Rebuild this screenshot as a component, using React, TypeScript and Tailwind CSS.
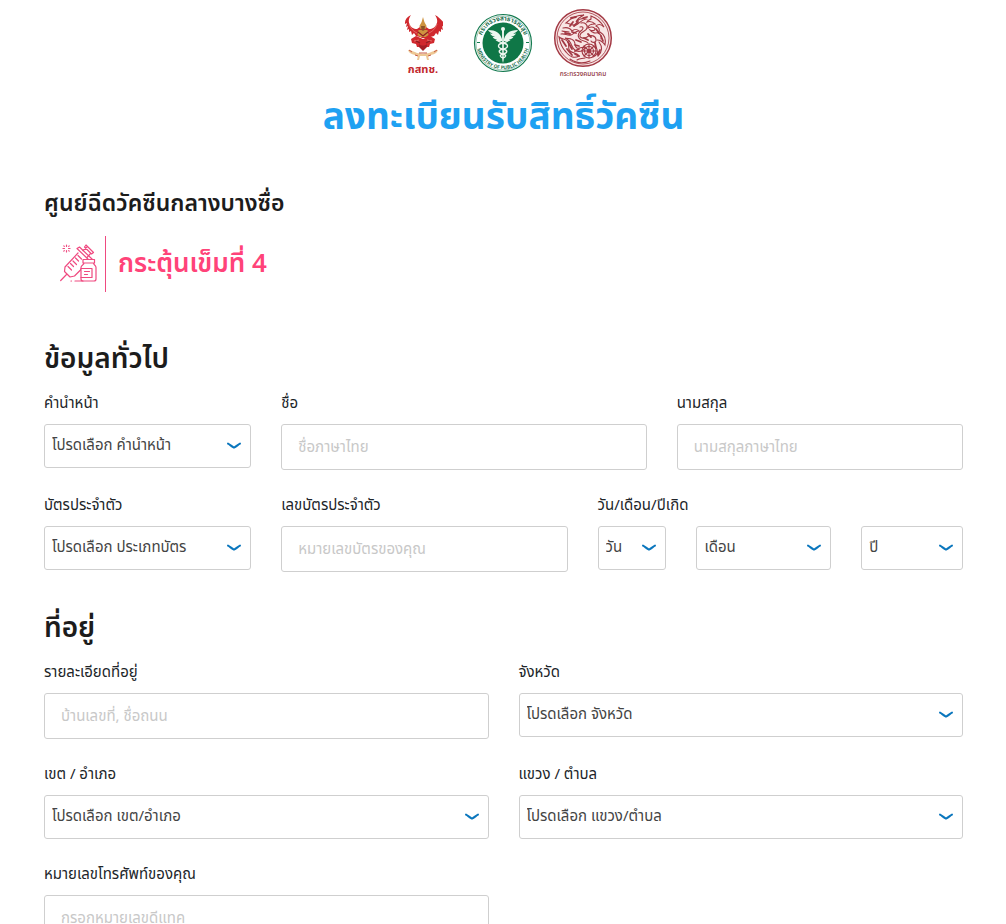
import type { ReactNode } from 'react';

const controlBase =
  'w-full rounded-[3px] border border-[#cfcfcf] bg-white text-[15px] leading-6 outline-none focus:border-[#0a7cc9]';

function Label({ htmlFor, children }: { htmlFor: string; children: ReactNode }) {
  return (
    <label htmlFor={htmlFor} className="block text-[15px] leading-6 text-[#212529]">
      {children}
    </label>
  );
}

function Select({ id, placeholder, label }: { id: string; placeholder: string; label?: string }) {
  return (
    <div className="relative">
      <select
        id={id}
        aria-label={label}
        defaultValue=""
        className={`${controlBase} h-11 appearance-none pr-7 pl-[7px] text-[#444444]`}
      >
        <option value="">{placeholder}</option>
      </select>
      <svg
        viewBox="0 0 16 8"
        className="pointer-events-none absolute top-[18px] right-[9px] h-2 w-4"
        fill="none"
        stroke="#0a76bd"
        strokeWidth="2"
        strokeLinecap="round"
        aria-hidden="true"
      >
        <path d="M2 1.6C4 2.6 5.8 4.8 8 5.6C10.2 4.8 12 2.6 14 1.6" />
      </svg>
    </div>
  );
}

type FieldProps = { id: string; label: string; placeholder: string; className: string };

function SelectField({ id, label, placeholder, className }: FieldProps) {
  return (
    <div className={`flex flex-col gap-2 ${className}`}>
      <Label htmlFor={id}>{label}</Label>
      <Select id={id} placeholder={placeholder} />
    </div>
  );
}

function TextField({ id, label, placeholder, className }: FieldProps) {
  return (
    <div className={`flex flex-col gap-2 ${className}`}>
      <Label htmlFor={id}>{label}</Label>
      <input
        id={id}
        type="text"
        placeholder={placeholder}
        className={`${controlBase} h-[46px] px-4 text-[#444444] placeholder:text-[#c8c8c8]`}
      />
    </div>
  );
}

function GarudaLogo() {
  return (
    <svg viewBox="0 0 40 66" className="h-[66px] w-10" role="img" aria-label="กสทช.">
      <g fill="#d0282e">
        <path d="M8 3C4 5 1.500 8 2 12l2-1-1 4 2-1-1 4 2-1 0 3 2-1 1 4 2-2 2 3 4 1 2 1h6l2-1 4-1 2-3 2 2 1-4 2 1 0-3 2 1-1-4 2 1-1-4 2 1C38.500 8 36 5 32 3c2 3 3 6 1.500 9-1 3-4 5-7.500 5l-3-2h-6l-3 2c-3.500 0-6.500-2-7.500-5C5 9 6 6 8 3Z" />
        <path d="M8 27l5-3 7 3 7-3 5 3-1 4-4 1-1 3-4 0-2 3-2-3-4 0-1-3-4-1Z" />
      </g>
      <g fill="none" stroke="#f4b1a0" strokeWidth=".5">
        <path d="M6 12c2 5 4 7 8 9M34 12c-2 5-4 7-8 9M11 29l5-1m8 0 5 1" />
      </g>
      <g fill="#cf9440">
        <path d="M20 5l1.400 5 2.200 4-1 3h-5.200l-1-3 2.200-4Z" />
        <path d="M15.500 18h9l1 5-3 2h-5l-3-2Z" />
      </g>
      <path d="M18 14h4l-.5 4L20 19l-1.500-1Z" fill="#8d5328" />
      <path d="M15 20l5 4 5-4M13 29l4 2m10-2-4 2" fill="none" stroke="#8d2024" strokeWidth="1.300" />
      <path d="M16 32c2 2 6 2 8 0l0 3-4 4-4-4Z" fill="#a31e26" />
      <path d="M5 38c4 0 6 2 9 3l6 1 6-1c3-1 5-3 9-3-1 3-3 4-7 5l-3 1 1 4h-2l-1-4h-6l-1 4h-2l1-4-3-1C8 42 6 41 5 38Z" fill="#edc794" />
      <path d="M6 38l3 2m25-2-3 2M12 43l3 1m10 0 3-1M16 41h8" fill="none" stroke="#c65a45" strokeWidth="1" />
      <text x="20" y="61" textAnchor="middle" fontSize="11" fontWeight="700" fill="#c2262c">
        กสทช.
      </text>
    </svg>
  );
}

function HealthLogo() {
  return (
    <svg viewBox="0 0 60 60" className="h-[60px] w-[60px]" role="img" aria-label="กระทรวงสาธารณสุข">
      <defs>
        <path id="health-top" d="M7.500 30A22.500 22.500 0 0 1 52.500 30" />
        <path id="health-bottom" d="M3.800 30A26.200 26.200 0 0 0 56.200 30" />
      </defs>
      <circle cx="30" cy="30" r="28.500" fill="#fff" stroke="#147a50" strokeWidth="1.200" />
      <circle cx="30" cy="30" r="27" fill="none" stroke="#147a50" strokeWidth=".4" />
      <circle cx="30" cy="30" r="20.500" fill="#0f7747" />
      <text fontSize="6.500" fontWeight="700" fill="#1d6f4e">
        <textPath href="#health-top" startOffset="50%" textAnchor="middle">
          กระทรวงสาธารณสุข
        </textPath>
      </text>
      <text fontSize="4.800" fontWeight="700" fill="#1d6f4e">
        <textPath href="#health-bottom" startOffset="50%" textAnchor="middle">
          MINISTRY OF PUBLIC HEALTH
        </textPath>
      </text>
      <path d="M4 29.500h3m46 0h3" stroke="#147a50" strokeWidth="1" />
      <g fill="#edf7ef">
        <path d="M29 26C27 20 23 17 15 17c1 2 3 3 5 3.500-1 .2-2 .2-3 0 1 2 3 3 5 3-1 .5-1.500.5-2.500.3 1 2 3 2.600 5 2.500-1 .5-1 .6-2 .6 2 2 4 2 6.500 1Z" />
        <path d="M31 26C33 20 37 17 45 17c-1 2-3 3-5 3.500 1 .2 2 .2 3 0-1 2-3 3-5 3 1 .5 1.500.5 2.500.3-1 2-3 2.600-5 2.500 1 .5 1 .6 2 .6-2 2-4 2-6.500 1Z" />
        <circle cx="30" cy="16" r="2" />
        <path d="M29 16h2L30.700 47 30 50l-.7-3Z" />
      </g>
      <path
        d="M27 23c-4 2-3 6 3 7 6 1 6 5 0 6-5 1-5 4 0 5 4 1 3 3 0 4M33 23c4 2 3 6-3 7-6 1-6 5 0 6 5 1 5 4 0 5-4 1-3 3 0 4"
        fill="none"
        stroke="#edf7ef"
        strokeWidth="1.400"
      />
    </svg>
  );
}

function TransportLogo() {
  return (
    <svg viewBox="0 0 60 70" className="h-[70px] w-[60px]" role="img" aria-label="กระทรวงคมนาคม">
      <circle cx="30" cy="30" r="28.300" fill="#f8e6e5" stroke="#a33a45" strokeWidth="1.500" />
      <circle cx="30" cy="30" r="26" fill="none" stroke="#a94650" strokeWidth=".9" />
      <g fill="none" stroke="#a23843" strokeWidth="1.100" strokeLinecap="round">
        <path d="M13 15c5-5 11-8 18-8-4 2-7 4-8 7 3-3 7-4 10-3-5 1-6 4-10 6-4 1-7-2-10-2Z" />
        <path d="M10 20c4-1 7 0 9 3 2-2 5-2 7 0-4 0-5 3-8 4-4 1-6-2-10-1m1-3c3 1 5 0 7 1" />
        <path d="M38 8c6 2 10 6 13 11-3-3-6-3-8-1 2 1 4 3 3 6-3 2-7 1-9-2 2 1 5 1 5-1-1-3-5-2-7-1 0-4 4-4 7-4-2-2-5-3-8-2 1-2 3-2 4-3Z" />
        <path d="M28 15c4-1 7 2 6 5-1 4-6 3-7 7-1 3 4 4 7 2 4-3 9-1 9 3 0 3-4 3-5 1M27 19c3-1 4 1 2 3-3 2-5 5-3 8 2 4 7 2 9 5" />
        <path d="M6 29c3 3 7 1 9 5 2 3-1 6 2 9 3 3 7 1 9 5-5 3-10 0-13-4-4-4-6-9-7-15Z" />
        <path d="M12 30c4 1 7 0 9 3s0 5 3 7c3 1 5-2 8 0-2 3-5 4-9 3-4-2-4-6-6-9-1-2-3-3-5-4Z" />
        <path d="M47 24c5 3 6 8 5 13-2-3-5-5-8-5m2 2c3 4 4 9-1 14-1-3 0-6-2-9m5-8c1-3-1-5-3-6" />
        <circle cx="36" cy="43" r="7" />
        <circle cx="36" cy="43" r="4.500" />
        <circle cx="36" cy="43" r="1.500" />
        <path d="M36 36v14m-7-7h14m-12-5 10 10m0-10L31 48M17 51c6 4 13 5 20 2m3-4c3-1 4-3 5-5M24 52c3-2 5-1 8-2" />
        <path
          d="M17 18l3-4m1 4 4-4m5-4 4-1m-15 15 4 1m-8 9 4 7m3-4 4 1m-3-6 5 2m7-8 3 3m-7 1 4 2m8-11 3 4M9 32l4 6m1 3 5 6m29-19 2 5m-8 2 1 5m-17 1-4 2M18 10l5-1M12 25l5 1m5 20 4 2m19-2 2-4"
          strokeWidth="1.800"
        />
      </g>
      <text x="30" y="68" textAnchor="middle" fontSize="6.500" fontWeight="500" fill="#8e2f3a">
        กระทรวงคมนาคม
      </text>
    </svg>
  );
}

function VaccineIcon() {
  return (
    <svg
      viewBox="0 0 40 40"
      className="h-10 w-10"
      fill="none"
      stroke="#ef4a80"
      strokeWidth="1.200"
      strokeLinecap="round"
      strokeLinejoin="round"
      aria-hidden="true"
    >
      <path d="M8.500 1v1.500m0 4V8M5 4.500h1.500m4 0H12M5.800 1.800l.5.5m4.900-.5-.5.500M5.800 7.200l.5-.5m4.900.5-.5-.5" />
      <path d="M2.700 36.500 9 30M7 23l-.5 4.500 5.500 5.500 4.500-1 13-13M7 23 20 9" />
      <path d="M19 4.500 33 18l1.500-2.500L21.500 3Z" />
      <path d="M25 6.500 29 3m-1-2 7.500 7.500L33.500 10 26.500 3Zm4.500 8.500-3.500 4" />
      <path d="M10 22.500l3.500 3.500M12.500 19.500l3 3M15 17l3.500 3.500M17.500 14l3 3M20 11.500l3.500 3.500" />
      <path
        d="M25 15.500h11.500V19H25Zm1 3.500c0 2-3 2-3 4.500V35c0 1 .8 2 2 2h11c1.200 0 2-1 2-2V23.500c0-2.500-2.500-2.500-2.500-4.500"
        fill="#fff"
      />
      <path d="M23 24.500h11v9H23M26.500 27.500h5m-5 3h3M17 37h8M13 37h.5" />
    </svg>
  );
}

function SectionTitle({ children }: { children: ReactNode }) {
  return <h2 className="mb-[7px] text-[28px] leading-[50px] font-semibold text-[#1c1c1c]">{children}</h2>;
}

export default function App() {
  return (
    <main className="bg-white pr-[43px] pb-10 pl-11 font-['Noto_Sans_Thai','Noto_Sans',sans-serif] text-[#212529]">
      <header className="flex flex-col items-center">
        <div className="flex items-start justify-center gap-5 pt-2 pl-[9px]">
          <div className="pt-1 pr-[10px]">
            <GarudaLogo />
          </div>
          <div className="pt-[5px]">
            <HealthLogo />
          </div>
          <TransportLogo />
        </div>
        <h1 className="mt-[13px] text-[37px] leading-[54px] font-bold text-[#1ea1f2]">ลงทะเบียนรับสิทธิ์วัคซีน</h1>
      </header>

      <section className="mt-[41px]">
        <h2 className="text-[23px] leading-9 font-semibold text-[#1c1c1c]">ศูนย์ฉีดวัคซีนกลางบางซื่อ</h2>
        <div className="mt-[14px] flex h-14 items-center pl-[14px]">
          <VaccineIcon />
          <p className="ml-[7px] flex h-14 items-center border-l border-[#ef4a80] pl-3 text-[26px] font-semibold text-[#ff4379]">
            กระตุ้นเข็มที่ 4
          </p>
        </div>
      </section>

      <form onSubmit={(event) => event.preventDefault()}>
        <section className="mt-[43px]">
          <SectionTitle>ข้อมูลทั่วไป</SectionTitle>
          <div className="grid grid-cols-12 gap-x-[30px] gap-y-6">
            <SelectField id="prefix" label="คำนำหน้า" placeholder="โปรดเลือก คำนำหน้า" className="col-span-3" />
            <TextField id="first-name" label="ชื่อ" placeholder="ชื่อภาษาไทย" className="col-span-5" />
            <TextField id="last-name" label="นามสกุล" placeholder="นามสกุลภาษาไทย" className="col-span-4" />
            <SelectField id="card-type" label="บัตรประจำตัว" placeholder="โปรดเลือก ประเภทบัตร" className="col-span-3" />
            <TextField id="card-number" label="เลขบัตรประจำตัว" placeholder="หมายเลขบัตรของคุณ" className="col-span-4" />
            <div className="col-span-5 flex flex-col gap-2">
              <Label htmlFor="birth-day">วัน/เดือน/ปีเกิด</Label>
              <div className="grid grid-cols-12 gap-x-[30px]">
                <div className="col-span-3">
                  <Select id="birth-day" placeholder="วัน" />
                </div>
                <div className="col-span-5">
                  <Select id="birth-month" placeholder="เดือน" label="เดือน" />
                </div>
                <div className="col-span-4">
                  <Select id="birth-year" placeholder="ปี" label="ปี" />
                </div>
              </div>
            </div>
          </div>
        </section>

        <section className="mt-8">
          <SectionTitle>ที่อยู่</SectionTitle>
          <div className="grid grid-cols-2 gap-x-[30px] gap-y-6">
            <TextField id="address" label="รายละเอียดที่อยู่" placeholder="บ้านเลขที่, ชื่อถนน" className="col-span-1" />
            <SelectField id="province" label="จังหวัด" placeholder="โปรดเลือก จังหวัด" className="col-span-1" />
            <SelectField id="district" label="เขต / อำเภอ" placeholder="โปรดเลือก เขต/อำเภอ" className="col-span-1" />
            <SelectField id="subdistrict" label="แขวง / ตำบล" placeholder="โปรดเลือก แขวง/ตำบล" className="col-span-1" />
            <TextField id="phone" label="หมายเลขโทรศัพท์ของคุณ" placeholder="กรอกหมายเลขดีแทค" className="col-span-1" />
          </div>
        </section>
      </form>
    </main>
  );
}
